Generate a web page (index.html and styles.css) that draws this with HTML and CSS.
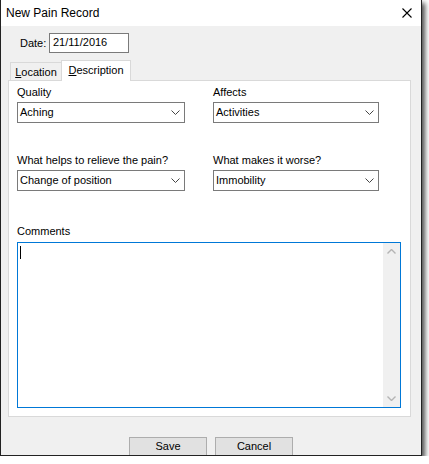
FILE: index.html
```html
<!DOCTYPE html>
<html>
<head>
<meta charset="utf-8">
<title>New Pain Record</title>
<link rel="stylesheet" href="styles.css">
</head>
<body>
<div class="window">
  <div class="titlebar">
    <span class="title">New Pain Record</span>
    <svg class="close" width="10" height="10" viewBox="0 0 10 10"><path d="M0.5 0.5L9.5 9.5M9.5 0.5L0.5 9.5" stroke="#000" stroke-width="1.1" fill="none"/></svg>
  </div>
  <div class="content">
    <div class="date-row">
      <span class="date-label">Date:</span>
      <div class="date-box">21/11/2016</div>
    </div>
    <div class="tabs">
      <div class="tab"><u>L</u>ocation</div>
      <div class="tab active"><u>D</u>escription</div>
    </div>
    <div class="panel">
      <div class="fields">
        <div class="field">
          <div class="label">Quality</div>
          <div class="combo"><span>Aching</span><svg width="9" height="5" viewBox="0 0 9 5"><path d="M0.5 0.5L4.5 4.5L8.5 0.5" stroke="#444" fill="none"/></svg></div>
        </div>
        <div class="field">
          <div class="label">Affects</div>
          <div class="combo"><span>Activities</span><svg width="9" height="5" viewBox="0 0 9 5"><path d="M0.5 0.5L4.5 4.5L8.5 0.5" stroke="#444" fill="none"/></svg></div>
        </div>
        <div class="field row2">
          <div class="label">What helps to relieve the pain?</div>
          <div class="combo"><span>Change of position</span><svg width="9" height="5" viewBox="0 0 9 5"><path d="M0.5 0.5L4.5 4.5L8.5 0.5" stroke="#444" fill="none"/></svg></div>
        </div>
        <div class="field row2">
          <div class="label">What makes it worse?</div>
          <div class="combo"><span>Immobility</span><svg width="9" height="5" viewBox="0 0 9 5"><path d="M0.5 0.5L4.5 4.5L8.5 0.5" stroke="#444" fill="none"/></svg></div>
        </div>
      </div>
      <div class="comments">
        <div class="label">Comments</div>
        <div class="textarea">
          <div class="text"><span class="caret"></span></div>
          <div class="scrollbar">
            <svg width="9" height="5" viewBox="0 0 9 5"><path d="M0.5 4.5L4.5 0.5L8.5 4.5" stroke="#b4b4b4" stroke-width="1.4" fill="none"/></svg>
            <svg width="9" height="5" viewBox="0 0 9 5"><path d="M0.5 0.5L4.5 4.5L8.5 0.5" stroke="#b4b4b4" stroke-width="1.4" fill="none"/></svg>
          </div>
        </div>
      </div>
    </div>
    <div class="buttons">
      <div class="button">Save</div>
      <div class="button">Cancel</div>
    </div>
  </div>
</div>
</body>
</html>
```
FILE: styles.css
```css
body {
  margin: 0;
  background: #fff;
  font-family: "Liberation Sans", Arial, sans-serif;
  font-size: 11px;
  color: #000;
}
.window {
  width: 422px;
  height: 456px;
  box-sizing: border-box;
  border: 1px solid #222;
  border-top: none;
  box-shadow: 3px 3px 5px rgba(0, 0, 0, 0.7);
  background: #f0f0f0;
  display: flex;
  flex-direction: column;
  overflow: hidden;
}
.titlebar {
  height: 26px;
  flex: none;
  background: #fff;
  display: flex;
  align-items: center;
  justify-content: space-between;
  padding: 0 9px 0 5px;
}
.title {
  font-size: 12px;
  color: #000;
}
.content {
  flex: 1;
  display: flex;
  flex-direction: column;
  min-height: 0;
}
.date-row {
  display: flex;
  align-items: center;
  gap: 4px;
  margin: 7px 0 0 19px;
}
.date-label {
  width: 25px;
}
.date-box {
  width: 80px;
  height: 20px;
  box-sizing: border-box;
  border: 1px solid #7a7a7a;
  background: #fff;
  padding-left: 3px;
  line-height: 17px;
}
.tabs {
  display: flex;
  align-items: flex-end;
  height: 20px;
  margin: 7px 0 0 9px;
  position: relative;
  z-index: 1;
}
.tab {
  width: 52px;
  height: 18px;
  box-sizing: border-box;
  border: 1px solid #d9d9d9;
  border-bottom: none;
  background: #f0f0f0;
  text-align: center;
  padding-top: 2px;
  line-height: 14px;
}
.tab.active {
  width: 70px;
  height: 21px;
  margin-left: -1px;
  margin-bottom: -1px;
  background: #fff;
}
.panel {
  width: 403px;
  height: 337px;
  flex: none;
  box-sizing: border-box;
  margin-left: 7px;
  border: 1px solid #d9d9d9;
  background: #fff;
  padding: 5px 0 0 8px;
}
.fields {
  display: grid;
  grid-template-columns: 168px 166px;
  column-gap: 28px;
}
.field.row2 {
  margin-top: 31px;
}
.label {
  line-height: 13px;
  height: 13px;
  margin-bottom: 3px;
}
.combo {
  height: 21px;
  box-sizing: border-box;
  border: 1px solid #7a7a7a;
  background: #fff;
  display: flex;
  align-items: center;
  justify-content: space-between;
  padding: 0 4px 1px 2px;
}
.combo svg {
  flex: none;
  margin-top: 1px;
}
.comments {
  margin-top: 34px;
}
.comments .label {
  margin-bottom: 4px;
}
.textarea {
  width: 384px;
  height: 166px;
  box-sizing: border-box;
  border: 1px solid #0078d7;
  background: #fff;
  display: flex;
}
.text {
  flex: 1;
  padding: 3px 0 0 2px;
}
.caret {
  display: block;
  width: 1px;
  height: 13px;
  background: #000;
}
.scrollbar {
  width: 17px;
  flex: none;
  background: #f0f0f0;
  display: flex;
  flex-direction: column;
  align-items: center;
  justify-content: space-between;
  padding: 6px 0 6px;
  box-sizing: border-box;
}
.buttons {
  display: flex;
  justify-content: center;
  gap: 8px;
  margin-top: 20px;
}
.button {
  width: 78px;
  height: 23px;
  flex: none;
  box-sizing: border-box;
  border: 1px solid #adadad;
  background: #e1e1e1;
  text-align: center;
  line-height: 17px;
}
```
